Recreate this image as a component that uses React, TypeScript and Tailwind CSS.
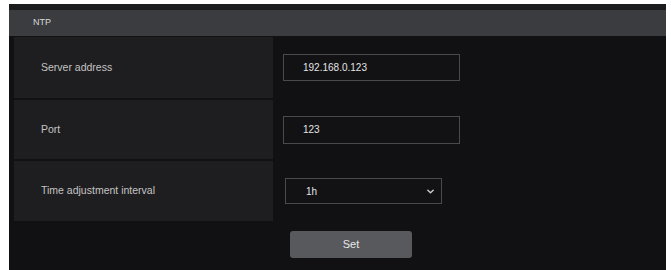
import React from "react";

function Row({ label, h, children }: { label: string; h: string; children: React.ReactNode }) {
  return (
    <div className={`flex items-stretch ${h}`}>
      <div className="w-[259px] bg-[#1e1e20] flex items-center pl-[27px] text-[10.5px] text-[#c4c4c4]">
        {label}
      </div>
      <div className="flex items-center pl-[10px]">{children}</div>
    </div>
  );
}

export default function App() {
  return (
    <div
      className="w-[671px] h-[270px] bg-white pl-[9px] pt-[4px] pr-[5px] overflow-hidden"
      style={{ fontFamily: '"Liberation Sans", Arial, sans-serif' }}
    >
      <div className="h-full bg-[#111113] flex flex-col">
        <div className="h-[6px] bg-[#1b1c1e]" />
        <div className="h-[26px] bg-[#3b3c3f] flex items-center pl-[24px] text-[9px] text-[#d8d8d8]">NTP</div>
        <div className="flex flex-col gap-[2px] pl-[5px] pt-[1px]">
          <Row label="Server address" h="h-[61px]">
            <div className="w-[177px] h-[27px] border border-[#4a4a4d] bg-[#121214] flex items-center pl-[19px] text-[10px] text-[#e4e4e4]">
              192.168.0.123
            </div>
          </Row>
          <Row label="Port" h="h-[59px]">
            <div className="w-[177px] h-[28px] border border-[#4a4a4d] bg-[#121214] flex items-center pl-[19px] text-[10px] text-[#e4e4e4]">
              123
            </div>
          </Row>
          <Row label="Time adjustment interval" h="h-[60px]">
            <div className="ml-[2px] w-[157px] h-[26px] border border-[#4a4a4d] bg-[#121214] flex items-center justify-between pl-[20px] pr-[6px] text-[10px] text-[#e4e4e4]">
              <span>1h</span>
              <svg width="9" height="9" viewBox="0 0 10 10" fill="none" stroke="#c8c8c8" strokeWidth="1.6" strokeLinecap="round" strokeLinejoin="round">
                <path d="M2 3.5 L5 6.5 L8 3.5" />
              </svg>
            </div>
          </Row>
        </div>
        <div className="pl-[281px] pt-[10px]">
          <button className="w-[122px] h-[27px] rounded-[3px] bg-[#58595c] text-[11px] text-[#e8e8e8] flex items-center justify-center">
            Set
          </button>
        </div>
      </div>
    </div>
  );
}
